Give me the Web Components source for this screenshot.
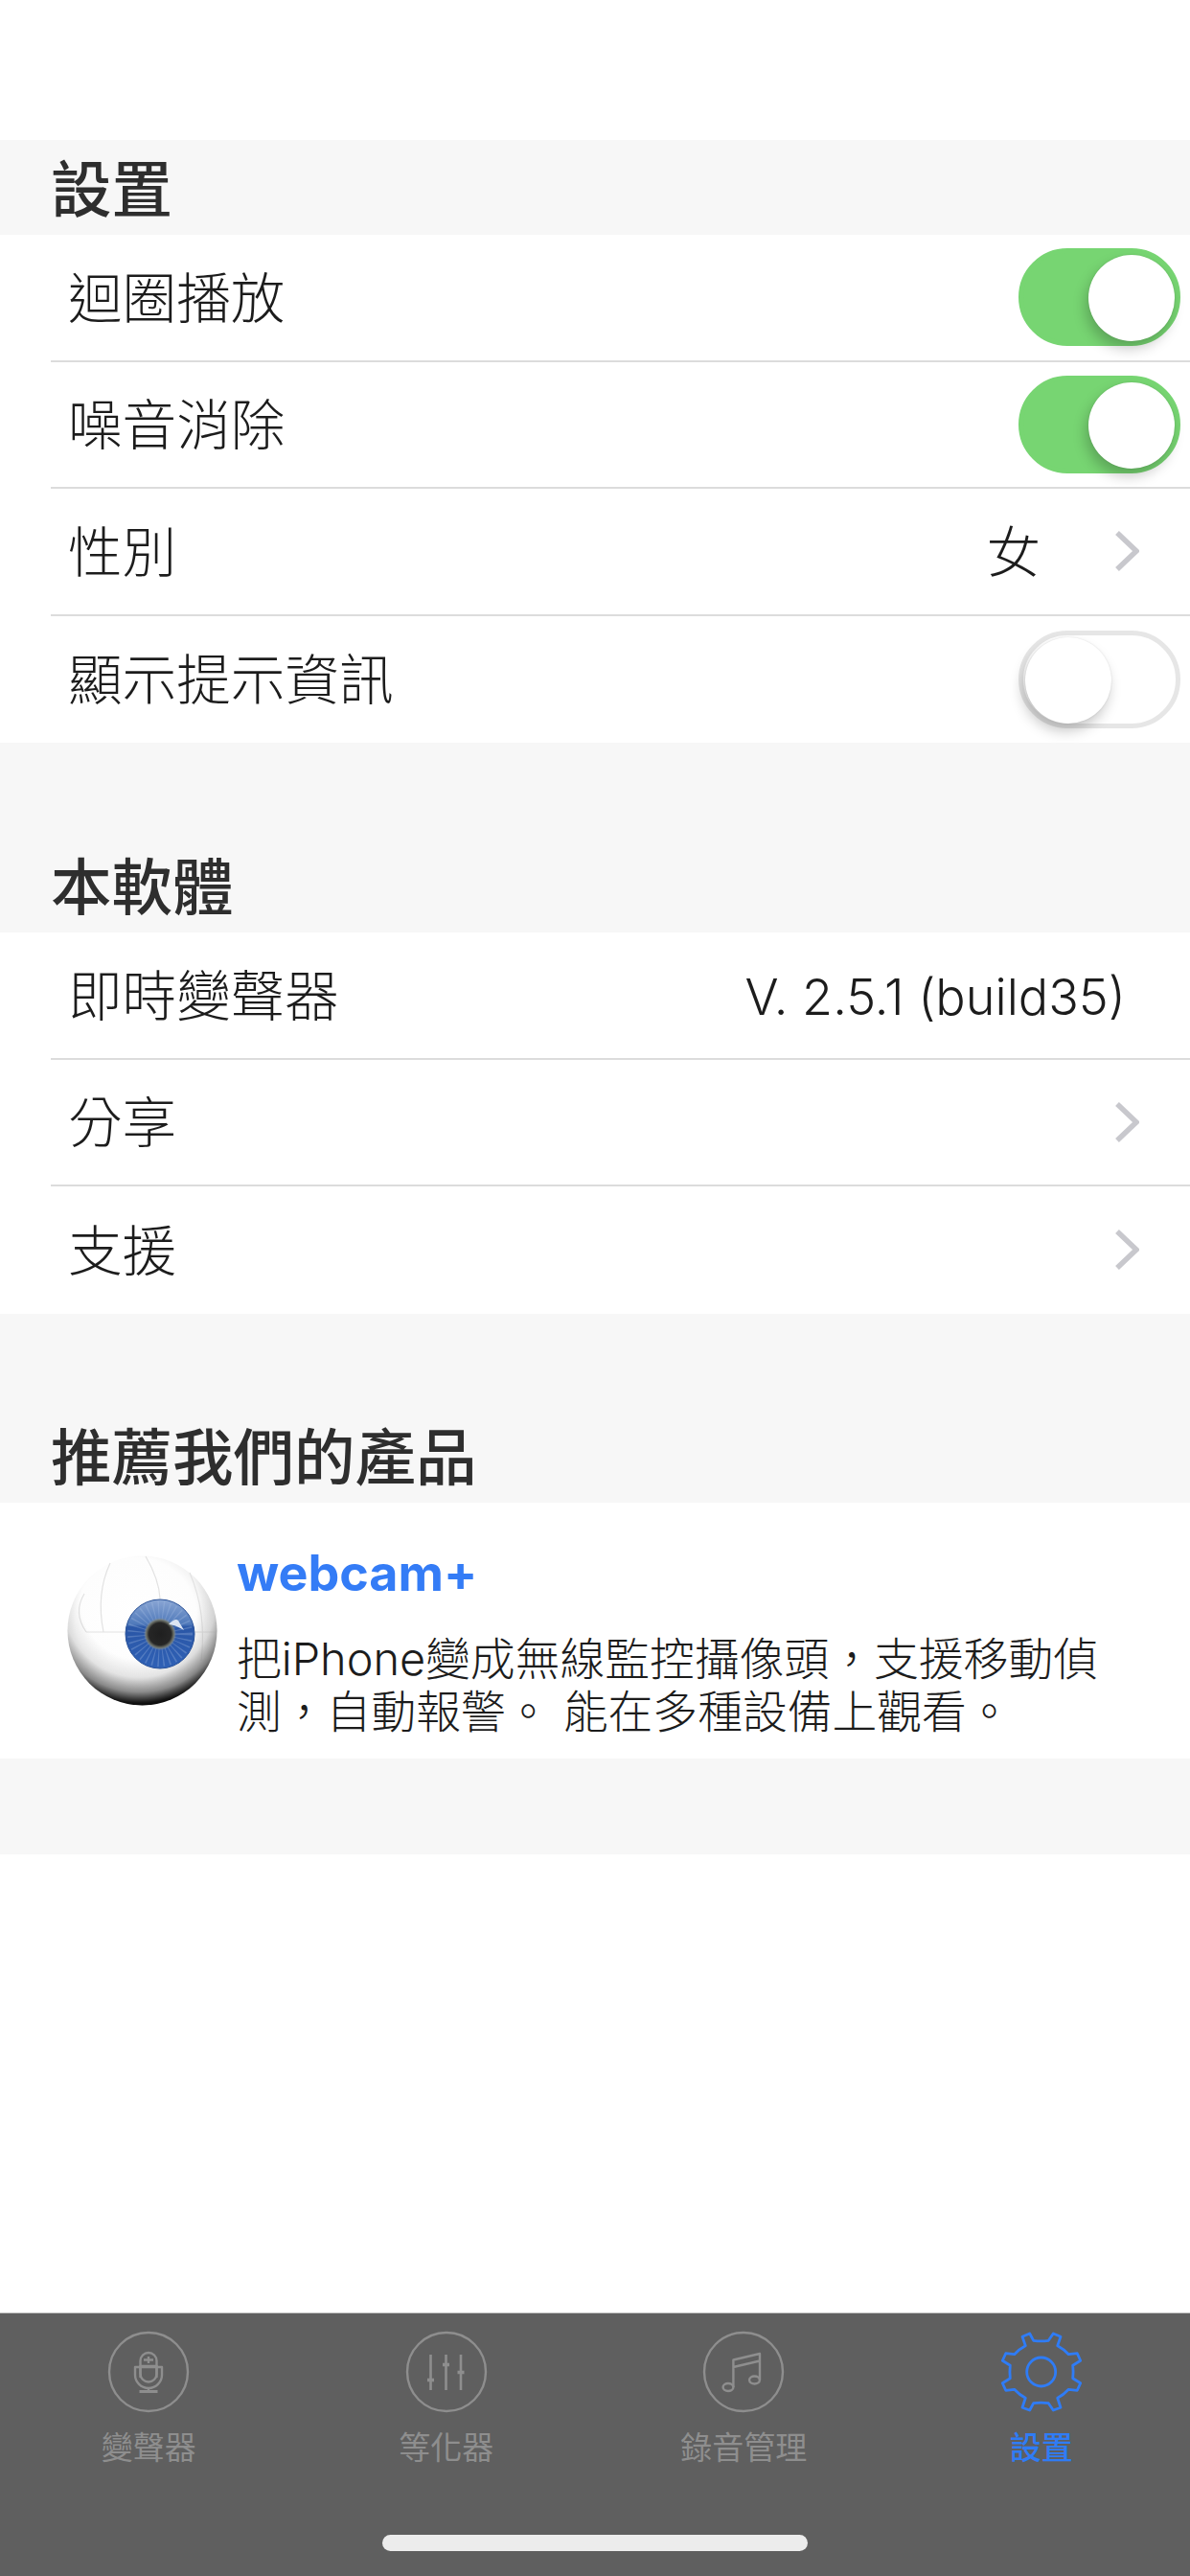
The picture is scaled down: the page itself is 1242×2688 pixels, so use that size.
<!DOCTYPE html>
<html lang="zh-Hant">
<head>
<meta charset="utf-8">
<title>設置</title>
<style>
  html, body { margin: 0; padding: 0; background: #fff; }
  body { font-family: "Inter", "Noto Sans CJK TC", sans-serif; }
</style>
</head>
<body>
<app-shell>
  <settings-section heading="設置" style="--head:99px">
    <settings-row label="迴圈播放"><toggle-switch on></toggle-switch></settings-row>
    <settings-row label="噪音消除"><toggle-switch on></toggle-switch></settings-row>
    <settings-row label="性別"><row-value gap="81">女</row-value><row-chevron></row-chevron></settings-row>
    <settings-row label="顯示提示資訊"><toggle-switch></toggle-switch></settings-row>
  </settings-section>
  <settings-section heading="本軟體" style="--head:198px">
    <settings-row label="即時變聲器"><row-value gap="70" latin>V. 2.5.1 (build35)</row-value></settings-row>
    <settings-row label="分享"><row-chevron></row-chevron></settings-row>
    <settings-row label="支援"><row-chevron></row-chevron></settings-row>
  </settings-section>
  <settings-section heading="推薦我們的產品" style="--head:197.5px">
    <product-card name="webcam+">把iPhone變成無線監控攝像頭，支援移動偵測，自動報警。 能在多種設備上觀看。</product-card>
  </settings-section>
  <section-footer></section-footer>
  <tab-bar>
    <tab-item label="變聲器" icon="mic"></tab-item>
    <tab-item label="等化器" icon="eq"></tab-item>
    <tab-item label="錄音管理" icon="music"></tab-item>
    <tab-item label="設置" icon="gear" active></tab-item>
  </tab-bar>
</app-shell>

<script>
const CJK = '"Noto Sans CJK TC", sans-serif';
const LATIN_CJK = '"Inter", "Noto Sans CJK TC", sans-serif';

function define(name, css, html) {
  customElements.define(name, class extends HTMLElement {
    constructor() {
      super();
      this.attachShadow({ mode: 'open' });
    }
    connectedCallback() {
      const h = typeof html === 'function' ? html(this) : html;
      this.shadowRoot.innerHTML = `<style>${css}</style>${h}`;
    }
  });
}

define('app-shell', `
  :host { display: flex; flex-direction: column; height: 2688px; padding-top: 146px; box-sizing: border-box; background: #fff; overflow: hidden; }
`, `<slot></slot>`);

define('settings-section', `
  :host { display: block; flex: none; }
  .head { height: var(--head); background: #f7f7f7; display: flex; align-items: flex-end; padding: 0 0 4px 53px;
          font: 500 63.5px/96px ${CJK}; color: #2e2e2e; box-sizing: border-box; }
  .rows { background: #fff; }
`, el => `<div class="head">${el.getAttribute('heading')}</div><div class="rows"><slot></slot></div>`);

define('section-footer', `
  :host { display: block; height: 100px; background: #f7f7f7; flex: none; margin-bottom: auto; }
`, ``);

define('settings-row', `
  :host { display: block; height: 132.5px; padding-left: 53px; box-sizing: border-box; }
  .in { height: 100%; display: flex; align-items: center; padding-left: 18px; box-sizing: border-box; border-bottom: 2px solid #dcdcdc; }
  :host(:last-child) .in { border-bottom: 0; }
  .label { flex: 1; font: 300 56.6px/1 ${CJK}; color: #1c1c1c; position: relative; top: -3px; }
`, el => `<div class="in"><div class="label">${el.getAttribute('label')}</div><slot></slot></div>`);

define('row-value', `
  :host { display: block; font: 300 52.2px/1 ${LATIN_CJK}; color: #1c1c1c; white-space: nowrap; }
  :host([gap="81"]) { font: 300 56.6px/1 ${CJK}; margin-right: 77px; position: relative; top: -3px; }
  :host([gap="70"]) { margin-right: 67px; position: relative; top: 2px; }
`, `<slot></slot>`);

define('row-chevron', `
  :host { display: block; width: 26px; height: 44px; margin-right: 53px; }
  svg { display: block; }
`, `<svg width="26" height="44" viewBox="0 0 26 44"><path d="M3 3 L23 22 L3 41" fill="none" stroke="#c8c8cd" stroke-width="5.5"/></svg>`);

define('toggle-switch', `
  :host { display: block; width: 169px; height: 102px; margin-right: 10px; position: relative; border-radius: 51px; box-sizing: border-box;
          background: #fff; border: 5px solid #e6e6e6; }
  :host([on]) { background: #77d572; border-color: #77d572; }
  .knob { position: absolute; top: 2px; left: 2px; width: 90px; height: 90px; border-radius: 50%; background: #fff;
          box-shadow: -3px 8px 14px rgba(0,0,0,.22), 0 0 2px rgba(0,0,0,.12); }
  :host([on]) .knob { left: auto; right: 1px; }
`, `<div class="knob"></div>`);

define('product-card', `
  :host { display: flex; height: 267px; padding: 55px 0 0 70px; box-sizing: border-box; background: #fff; }
  svg { flex: none; display: block; }
  .txt { margin-left: 20px; width: 930px; }
  .name { font: 700 52px/1 "Inter", sans-serif; color: #347cf6; margin-top: -7px; height: 88px; }
  .desc { font: 300 46.8px/55px ${LATIN_CJK}; color: #1c1c1c; }
`, el => `
<svg width="157" height="157" viewBox="0 0 157 157">
  <defs>
    <radialGradient id="ball" cx="0.46" cy="0.42" r="0.58">
      <stop offset="0" stop-color="#fff"/>
      <stop offset="0.7" stop-color="#fdfdfd"/>
      <stop offset="0.9" stop-color="#eaeaea"/>
      <stop offset="1" stop-color="#cfcfcf"/>
    </radialGradient>
    <radialGradient id="shade" cx="0.48" cy="0.3" r="0.71">
      <stop offset="0.55" stop-color="#000" stop-opacity="0"/>
      <stop offset="0.72" stop-color="#000" stop-opacity=".1"/>
      <stop offset="0.86" stop-color="#000" stop-opacity=".42"/>
      <stop offset="0.96" stop-color="#000" stop-opacity=".9"/>
      <stop offset="1" stop-color="#000"/>
    </radialGradient>
    <linearGradient id="iris" x1="0" y1="0" x2="0" y2="1">
      <stop offset="0" stop-color="#8aa6d4"/>
      <stop offset="0.36" stop-color="#4f79ba"/>
      <stop offset="0.4" stop-color="#2a56a6"/>
      <stop offset="1" stop-color="#2f61b6"/>
    </linearGradient>
    <radialGradient id="pupil" cx="0.5" cy="0.5" r="0.5">
      <stop offset="0" stop-color="#1f1f1f"/>
      <stop offset="0.68" stop-color="#262626"/>
      <stop offset="0.85" stop-color="#6f746c"/>
      <stop offset="1" stop-color="#8f9ba8" stop-opacity="0"/>
    </radialGradient>
  </defs>
  <circle cx="78.5" cy="78.5" r="78" fill="url(#ball)"/>
  <g fill="none" stroke="#e2e2e2" stroke-width="1.2">
    <path d="M20 80 H64"/><path d="M132 80 H156"/>
    <path d="M82 1 Q96 25 97 45"/>
    <path d="M45 8 Q30 40 38 80"/>
    <path d="M18 40 Q6 60 20 80"/>
    <path d="M128 18 Q146 60 140 110"/>
  </g>
  <circle cx="78.5" cy="78.5" r="78" fill="url(#shade)"/>
  <circle cx="97" cy="82" r="36" fill="url(#iris)" stroke="#2a5298" stroke-width="1"/>
  <circle cx="97" cy="82" r="24" fill="none" stroke="#a9c0e6" stroke-width="20" stroke-dasharray="1.2 3.6" opacity=".3"/>
  <circle cx="97" cy="82" r="17" fill="url(#pupil)"/>
  <path d="M106 72 Q113 65 116 68 L122 78 Q112 72 106 72 Z" fill="#dbe4f2"/>
</svg>
<div class="txt"><div class="name">${el.getAttribute('name')}</div><div class="desc"><slot></slot></div></div>`);

define('tab-bar', `
  :host { display: flex; flex-direction: column; justify-content: space-between; height: 275px; box-sizing: border-box;
          background: #5f5f5f; border-top: 1px solid #c4c4c4; flex: none; }
  .tabs { display: grid; grid-template-columns: repeat(4, 1fr); }
  .home { width: 444px; height: 17px; border-radius: 9px; background: #ececec; margin: 0 auto 26px; }
`, `<div class="tabs"><slot></slot></div><div class="home"></div>`);

const ICON_BODY = {
  mic: `<circle cx="50" cy="50" r="41"/>
        <path d="M41.5 56 V38.5 A8.5 8.5 0 0 1 58.5 38.5 V56"/>
        <path d="M41.5 44 H58.5 V52 A8.5 8.5 0 0 1 41.5 52 Z"/>
        <path d="M36 45 H64 V53 A14 14 0 0 1 36 53 Z"/>
        <path d="M45 37.5 H55 M50 34 V41 M50 67 V70"/>
        <path d="M40.5 70.5 H59.5" stroke-width="3"/>`,
  eq: `<circle cx="50" cy="50" r="41"/>
       <path d="M33.5 32 V69 M49.5 32 V69 M65 32 V69" stroke-width="2.6"/>
       <path d="M30 58.5 H37 M46 42.5 H53 M61.5 50.5 H68.5" stroke-width="3.4"/>`,
  music: `<circle cx="50" cy="50" r="41"/>
          <ellipse cx="34" cy="66" rx="5.4" ry="4"/>
          <ellipse cx="61.5" cy="58.5" rx="5.4" ry="4"/>
          <path d="M39.4 66 V37.5 L67 31 V58.5 M39.4 45 L67 38.5"/>`,
  gear: `<path d="M30 13.3 L37.7 10 L41.7 17.3 Q49.5 18.5 57.3 17.3 L62.3 10 L70 13.3 L66.7 22.7 Q73 26 78.3 31.7 L87.3 30.7 L90.7 38.3 L82.7 43.3 Q83.5 50 82.7 56.7 L90.7 61.7 L87.3 69.3 L78.3 68.3 Q73 74 66.7 77.3 L70 87.3 L62.3 90 L57.3 82.7 Q49.5 81.5 41.7 82.7 L37.7 90 L30 87.3 L33.3 77.3 Q27 74 21.7 68.3 L12.7 69.3 L9.3 61.7 L17.3 56.7 Q16.5 50 17.3 43.3 L9.3 38.3 L12.7 30.7 L21.7 31.7 Q27 26 33.3 22.7 Z"/>
         <circle cx="49.7" cy="50" r="15"/>`
};

define('tab-item', `
  :host { display: flex; flex-direction: column; align-items: center; padding-top: 11px; color: #8e8e8e; }
  :host([active]) { color: #2f7cf6; }
  svg { display: block; fill: none; stroke: currentColor; stroke-width: 2.4; stroke-linejoin: round; }
  :host([active]) svg { stroke-width: 2.8; }
  .t { font: 400 33px/36px ${CJK}; margin-top: 9px; }
  :host([active]) .t { font-weight: 500; }
`, el => `<svg width="100" height="100" viewBox="0 0 100 100">${ICON_BODY[el.getAttribute('icon')]}</svg><div class="t">${el.getAttribute('label')}</div>`);
</script>
</body>
</html>
